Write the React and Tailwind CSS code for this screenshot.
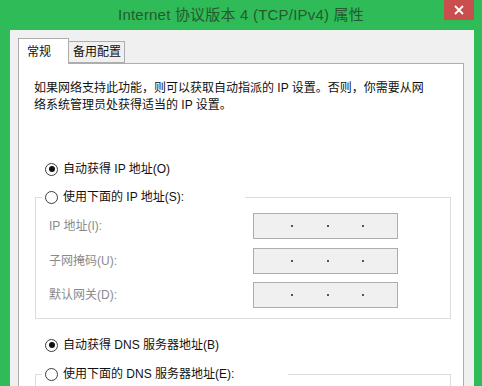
import React from 'react';

const font = { fontFamily: '"Liberation Sans", "Noto Sans CJK SC", sans-serif' };

function Radio({ checked }) {
  return (
    <span className="w-[13px] h-[13px] rounded-full border border-[#3c3c3c] bg-white flex items-center justify-center shrink-0">
      {checked && <span className="w-[6px] h-[6px] rounded-full bg-[#111]" />}
    </span>
  );
}

function IpBox() {
  return (
    <div className="w-[145px] h-[26px] bg-[#f0f0f0] border border-[#adadad] relative flex items-center">
      <span className="absolute left-[37px] w-[2px] h-[2px] bg-[#555]" />
      <span className="absolute left-[73px] w-[2px] h-[2px] bg-[#555]" />
      <span className="absolute left-[108px] w-[2px] h-[2px] bg-[#555]" />
    </div>
  );
}

function Field({ label }) {
  return (
    <div className="flex items-center">
      <span className="w-[204px] text-[12px] text-[#8a8a8a]">{label}</span>
      <IpBox />
    </div>
  );
}

export default function App() {
  return (
    <div className="w-[482px] h-[386px] bg-[#2fbb57] overflow-hidden relative" style={font}>
      <div className="h-[30px] flex items-center justify-center text-[15px] text-[#265a2e] tracking-[0.2px]">
        Internet 协议版本 4 (TCP/IPv4) 属性
      </div>
      <div className="absolute top-0 left-[444px] w-[30px] h-[20px] bg-[#c94f4f] flex items-center justify-center">
        <svg width="10" height="10" viewBox="0 0 10 10">
          <path d="M1 1 L9 9 M9 1 L1 9" stroke="#fff" strokeWidth="1.8" />
        </svg>
      </div>

      <div className="ml-[10px] mr-[8px] h-[356px] bg-[#f0f0f0] pl-[8px] pr-[10px] pt-[8px] flex flex-col">
        <div className="flex items-end h-[25px] relative z-10">
          <div className="w-[51px] h-[26px] bg-white border border-b-0 border-[#adadad] text-[12px] text-[#111] flex items-center pl-[8px] -mb-[1px]">
            常规
          </div>
          <div className="w-[56px] h-[22px] bg-[#f0f0f0] border border-l-0 border-[#adadad] text-[12px] text-[#111] flex items-center pl-[4px]">
            备用配置
          </div>
        </div>

        <div className="flex-1 bg-white border border-[#adadad] border-b-0 pt-[16px]">
          <p className="pl-[15px] text-[12px] leading-[17px] text-[#111]">
            如果网络支持此功能，则可以获取自动指派的 IP 设置。否则，你需要从网
            <br />
            络系统管理员处获得适当的 IP 设置。
          </p>

          <div className="ml-[26px] mt-[45px] h-[20px] flex items-center gap-[5px] text-[12px] text-[#111]">
            <Radio checked />
            <span>自动获得 IP 地址(O)</span>
          </div>

          <fieldset className="ml-[16px] mr-[12px] mt-[8px] border border-[#dcdcdc] pb-[10px]">
            <legend className="ml-[6px] w-[203px] h-[20px] bg-white flex items-center gap-[5px] pl-[3px] text-[12px] text-[#111]">
              <Radio />
              <span>使用下面的 IP 地址(S):</span>
            </legend>
            <div className="pt-[6px] pl-[13px] flex flex-col gap-[8.5px]">
              <Field label="IP 地址(I):" />
              <Field label="子网掩码(U):" />
              <Field label="默认网关(D):" />
            </div>
          </fieldset>

          <div className="ml-[26px] mt-[16px] h-[20px] flex items-center gap-[5px] text-[12px] text-[#111]">
            <Radio checked />
            <span>自动获得 DNS 服务器地址(B)</span>
          </div>

          <fieldset className="ml-[16px] mr-[12px] mt-[9px] border border-[#dcdcdc] h-[60px]">
            <legend className="ml-[6px] w-[246px] h-[20px] bg-white flex items-center gap-[5px] pl-[3px] text-[12px] text-[#111]">
              <Radio />
              <span>使用下面的 DNS 服务器地址(E):</span>
            </legend>
          </fieldset>
        </div>
      </div>
    </div>
  );
}
